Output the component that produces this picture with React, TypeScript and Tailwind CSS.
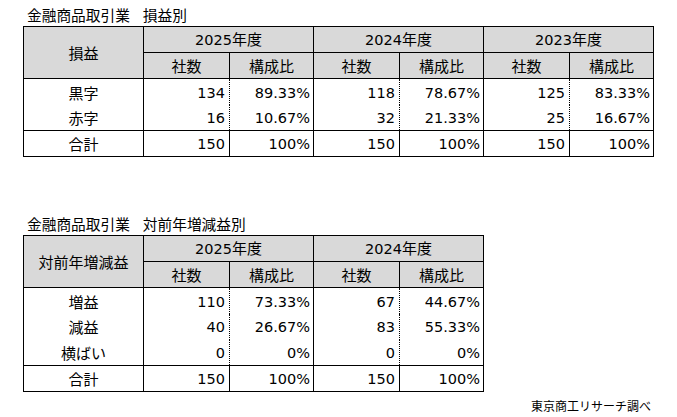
import React from "react";

type Row = { label: string; vals: [string, string][] };

const font = { fontFamily: '"Noto Sans CJK JP", "Noto Sans", sans-serif' };

function Num({ children }: { children: React.ReactNode }) {
  return <span className="font-['DejaVu_Sans'] text-[14.5px]">{children}</span>;
}

function DataTable({
  corner,
  years,
  rows,
  total,
}: {
  corner: string;
  years: string[];
  rows: Row[];
  total: Row;
}) {
  const width = 120 + years.length * 170;
  return (
    <table
      className="table-fixed border-collapse border border-black text-[15px] leading-none text-black"
      style={{ width: width + 1 }}
    >
      <colgroup>
        <col className="w-[120px]" />
        {years.map((y) => (
          <React.Fragment key={y}>
            <col className="w-[86px]" />
            <col className="w-[84px]" />
          </React.Fragment>
        ))}
      </colgroup>
      <thead>
        <tr className="h-[26px] bg-[#d9d9d9]">
          <th rowSpan={2} className="border border-black font-normal text-center align-middle">
            {corner}
          </th>
          {years.map((y) => (
            <th
              key={y}
              colSpan={2}
              className="border-l border-r border-black border-b border-b-dotted font-normal text-center"
            >
              <Num>{y}</Num>年度
            </th>
          ))}
        </tr>
        <tr className="h-[26px] bg-[#d9d9d9]">
          {years.map((y) => (
            <React.Fragment key={y}>
              <th className="border-l border-black border-r border-r-dotted border-b border-b-black font-normal text-center">
                社数
              </th>
              <th className="border-r border-black border-b font-normal text-center">構成比</th>
            </React.Fragment>
          ))}
        </tr>
      </thead>
      <tbody>
        {rows.map((r, i) => (
          <tr key={r.label} className="h-[26px]">
            <td className={`border-r border-black text-center ${i === 0 ? "pt-[2px]" : ""}`}>
              {r.label}
            </td>
            {r.vals.map(([a, b], j) => (
              <React.Fragment key={j}>
                <td className="border-r border-dotted border-black text-right pr-[4px]">
                  <Num>{a}</Num>
                </td>
                <td className="border-r border-black text-right pr-[3px]">
                  <Num>{b}</Num>
                </td>
              </React.Fragment>
            ))}
          </tr>
        ))}
        <tr className="h-[26px] border-t border-black">
          <td className="border-r border-t border-black text-center">{total.label}</td>
          {total.vals.map(([a, b], j) => (
            <React.Fragment key={j}>
              <td className="border-t border-black border-r border-r-dotted text-right pr-[4px]">
                <Num>{a}</Num>
              </td>
              <td className="border-t border-r border-black text-right pr-[3px]">
                <Num>{b}</Num>
              </td>
            </React.Fragment>
          ))}
        </tr>
      </tbody>
    </table>
  );
}

export default function App() {
  return (
    <div className="w-[677px] h-[417px] bg-white pl-[23px] overflow-hidden" style={font}>
      <div className="h-[26px] flex items-center pl-[4px] pt-[4px] text-[14.7px] text-black">
        <span>金融商品取引業</span>
        <span className="ml-[13px]">損益別</span>
      </div>
      <DataTable
        corner="損益"
        years={["2025", "2024", "2023"]}
        rows={[
          { label: "黒字", vals: [["134", "89.33%"], ["118", "78.67%"], ["125", "83.33%"]] },
          { label: "赤字", vals: [["16", "10.67%"], ["32", "21.33%"], ["25", "16.67%"]] },
        ]}
        total={{ label: "合計", vals: [["150", "100%"], ["150", "100%"], ["150", "100%"]] }}
      />
      <div className="h-[26px] mt-[52px] flex items-center pl-[4px] pt-[4px] text-[14.7px] text-black">
        <span>金融商品取引業</span>
        <span className="ml-[13px]">対前年増減益別</span>
      </div>
      <DataTable
        corner="対前年増減益"
        years={["2025", "2024"]}
        rows={[
          { label: "増益", vals: [["110", "73.33%"], ["67", "44.67%"]] },
          { label: "減益", vals: [["40", "26.67%"], ["83", "55.33%"]] },
          { label: "横ばい", vals: [["0", "0%"], ["0", "0%"]] },
        ]}
        total={{ label: "合計", vals: [["150", "100%"], ["150", "100%"]] }}
      />
      <div className="flex justify-end w-[628px] mt-[8px] text-[12px] leading-none text-black">
        東京商工リサーチ調べ
      </div>
    </div>
  );
}
